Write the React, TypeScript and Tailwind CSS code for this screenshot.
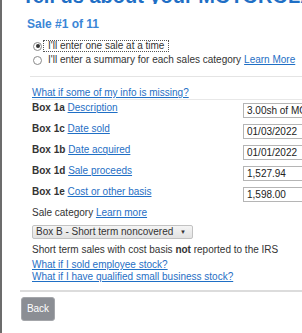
const rows = [
  { box: 'Box 1a', link: 'Description', value: '3.00sh of MOTOROLA SOLUTIONS' },
  { box: 'Box 1c', link: 'Date sold', value: '01/03/2022' },
  { box: 'Box 1b', link: 'Date acquired', value: '01/01/2022' },
  { box: 'Box 1d', link: 'Sale proceeds', value: '1,527.94' },
  { box: 'Box 1e', link: 'Cost or other basis', value: '1,598.00' },
];

function Radio({ checked }: { checked?: boolean }) {
  return (
    <span className="w-[9px] h-[9px] rounded-full border border-[#8a8a8a] bg-white flex items-center justify-center shrink-0">
      {checked && <span className="w-[4px] h-[4px] rounded-full bg-[#333]" />}
    </span>
  );
}

export default function App() {
  return (
    <div className="w-[302px] h-[333px] bg-white border-l-2 border-[#6c6c6c] overflow-hidden font-['Liberation_Sans',Arial,sans-serif] text-[#333] text-[10px] leading-[12px]">
      {/* page title, mostly scrolled out of view */}
      <div className="h-[4px] overflow-hidden flex items-end pl-[20px]">
        <div className="text-[20px] leading-[20px] font-bold text-[#1f6fc5] whitespace-nowrap mb-[-2px]">
          Tell us about your MOTOROLA STOCK sales
        </div>
      </div>

      <div className="mt-[13px] pl-[25px] text-[12px] leading-[14px] font-bold text-[#3b86d6]">Sale #1 of 11</div>

      <div className="mt-[8px] pl-[31px]">
        <div className="h-[14px] flex items-center">
          <Radio checked />
          <span className="ml-[2px] px-[4px] leading-[10px] outline outline-1 outline-dotted outline-[#555] whitespace-nowrap">
            I'll enter one sale at a time
          </span>
        </div>
        <div className="h-[14px] flex items-center whitespace-nowrap">
          <Radio />
          <span className="ml-[6px]">I'll enter a summary for each sales category </span>
          <a className="ml-[3px] text-[#1f6fc5] underline">Learn More</a>
        </div>
      </div>

      <div className="mt-[9px] ml-[28px] h-px bg-[#e4e4e4]" />

      <div className="mt-[10px] pl-[30px]">
        <a className="text-[#1f6fc5] underline">What if some of my info is missing?</a>
      </div>
      <div className="ml-[30px] h-px bg-[#e8e8e8]" />

      <div className="mt-[2px] pl-[30px]">
        {rows.map((r) => (
          <div key={r.box} className="h-[21px] flex items-start">
            <div className="w-[211px] shrink-0 whitespace-nowrap">
              <span className="font-bold">{r.box}</span>{' '}
              <a className="text-[#1f6fc5] underline">{r.link}</a>
            </div>
            <div className="mt-[1px] w-[80px] h-[15px] shrink-0 border border-[#b5b5b5] pl-[3px] flex items-center whitespace-nowrap overflow-hidden text-[#222]">
              {r.value}
            </div>
          </div>
        ))}
      </div>

      <div className="pl-[30px]">
        <div>
          Sale category <a className="text-[#1f6fc5] underline">Learn more</a>
        </div>
        <div className="mt-[6px] w-[161px] h-[14px] border border-[#c2c2c2] rounded-[2px] bg-gradient-to-b from-[#f4f4f4] to-[#e2e2e2] flex items-center justify-between pl-[3px] pr-[6px]">
          <span>Box B - Short term noncovered</span>
          <span className="text-[6px] leading-none">▼</span>
        </div>
        <div className="mt-[5px] whitespace-nowrap">
          Short term sales with cost basis <span className="font-bold">not</span> reported to the IRS
        </div>
        <div className="mt-[3px]">
          <a className="text-[#1f6fc5] underline">What if I sold employee stock?</a>
        </div>
        <div>
          <a className="text-[#1f6fc5] underline">What if I have qualified small business stock?</a>
        </div>
      </div>

      <div className="mt-[7px] ml-[18px] h-[2px] bg-[#dcdcdc]" />

      <div className="mt-[5px] pl-[19px]">
        <button className="w-[34px] h-[24px] rounded-[3px] bg-[#8b8e94] border border-[#a4a6aa] text-white text-[10px] flex items-center justify-center">
          Back
        </button>
      </div>
    </div>
  );
}
